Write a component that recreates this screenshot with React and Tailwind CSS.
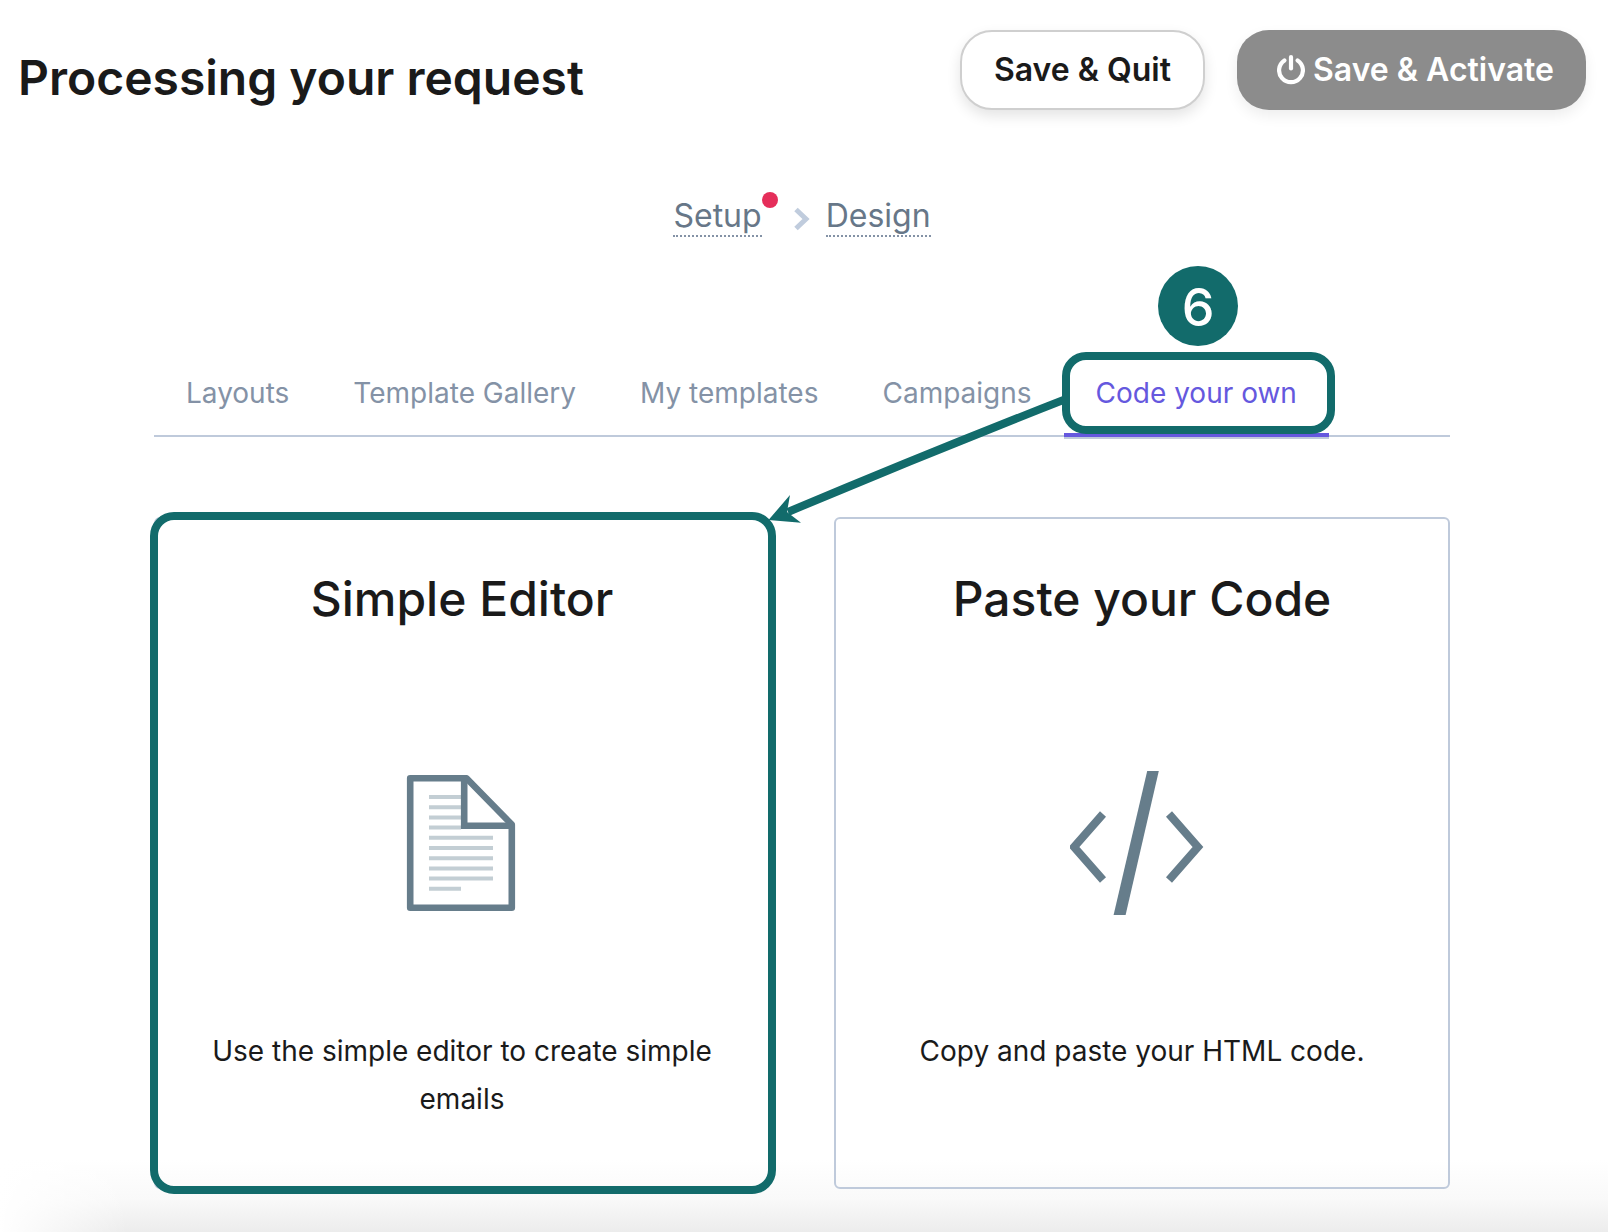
const tabs = ["Layouts", "Template Gallery", "My templates", "Campaigns"];

function PowerIcon() {
  return (
    <svg width="28" height="30" viewBox="0 0 28 30" fill="none" stroke="currentColor" strokeWidth="4.2" strokeLinecap="round" aria-hidden="true">
      <path d="M7.400 5.400A11.900 11.900 0 1 0 20.600 5.400" />
      <path d="M14 2.100V13.400" />
    </svg>
  );
}

function DocumentIcon() {
  return (
    <svg width="144" height="144" viewBox="0 0 144 144" fill="none" aria-hidden="true">
      <g stroke="#c3ced4" strokeWidth="4">
        <path d="M39 26H71M39 36.2H71M39 46.4H71M39 56.6H71" />
        <path d="M39 66.8H103M39 77H103M39 87.2H103M39 97.4H103M39 107.6H103M39 117.8H71" />
      </g>
      <path d="M20.2 7.2H76.5L121.8 53.5V136.8H20.2Z" stroke="#667d8b" strokeWidth="6.6" strokeLinejoin="round" />
      <path d="M74.2 7V54.8H121" stroke="#667d8b" strokeWidth="6.6" />
    </svg>
  );
}

function CodeIcon() {
  return (
    <svg width="144" height="144" viewBox="0 0 144 144" fill="none" aria-hidden="true">
      <path d="M77.200 0H88.800L55.600 144H43.600Z" fill="#667d8b" />
      <path d="M33 43L4 76L33 109" stroke="#667d8b" strokeWidth="8" />
      <path d="M99 43L128 76L99 109" stroke="#667d8b" strokeWidth="8" />
    </svg>
  );
}

function Card({ title, text, icon, highlighted }) {
  return (
    <a href="#" className="relative block rounded-md border-2 border-[#bfcadb] px-8 pt-12 pb-16 text-center">
      <h2 className="text-[48px] leading-16 font-medium">{title}</h2>
      <div className="mt-[140px] flex justify-center">{icon}</div>
      <p className="mt-28 min-h-24 text-[28px] leading-12">{text}</p>
      {highlighted && (
        <span className="pointer-events-none absolute -top-[7px] -right-2 -bottom-[7px] -left-1.5 rounded-3xl border-8 border-[#126b6b]" />
      )}
    </a>
  );
}

export default function App() {
  return (
    <div className="relative min-h-screen bg-white pr-1 pb-10 font-['Inter',sans-serif] text-[#1a1a1a]">
      <div className="pointer-events-none absolute inset-x-0 bottom-0 h-18 bg-[linear-gradient(to_right,white,transparent_128px),linear-gradient(to_top,#ececec,#f9f9f9_45%,white)]" />

      <header className="relative flex items-start justify-between px-[18px] pt-[30px]">
        <h1 className="mt-4 text-[48px] leading-16 font-semibold">Processing your request</h1>
        <div className="flex gap-8">
          <button type="button" className="h-20 rounded-[32px] border-2 border-[#cfcfcf] bg-white px-8 text-[32px] font-semibold shadow-[0_6px_14px_rgba(0,0,0,0.11)]">
            Save &amp; Quit
          </button>
          <button type="button" className="flex h-20 items-center gap-2 rounded-[32px] bg-[#8c8c8c] pr-8 pl-10 text-[32px] font-semibold text-white shadow-[0_6px_14px_rgba(0,0,0,0.07)]">
            <PowerIcon />
            Save &amp; Activate
          </button>
        </div>
      </header>

      <nav aria-label="Steps" className="relative mt-[87px] flex items-center justify-center text-[32px] leading-[38px] text-[#677788]">
        <a href="#" className="relative border-b-2 border-dotted border-[#8492a6]">
          Setup
          <span className="absolute -top-[5px] left-full size-4 rounded-full bg-[#e52e5a]" />
        </a>
        <svg className="mt-1 mr-4 ml-8" width="16" height="24" viewBox="0 0 16 24" fill="none" stroke="#c0ccdd" strokeWidth="5" aria-hidden="true">
          <path d="M2 2.500L12 12L2 21.500" />
        </svg>
        <a href="#" className="border-b-2 border-dotted border-[#8492a6]">Design</a>
      </nav>

      <main className="relative mx-auto mt-[116px] max-w-[1296px]">
        <nav aria-label="Templates" className="relative z-10 flex border-b-2 border-[#bfcadb] text-[28px] leading-10 text-[#8492a6]">
          {tabs.map((tab) => (
            <a key={tab} href="#" className="-mb-0.5 px-8 pt-5 pb-6 whitespace-nowrap">{tab}</a>
          ))}
          <div className="relative -mb-0.5">
            <a href="#" aria-current="page" className="block border-b-4 border-[#6558de] px-8 py-5 whitespace-nowrap text-[#6558de] shadow-[0_2px_0_#bfcadb]">
              Code your own
            </a>
            <span className="pointer-events-none absolute -top-px -right-1.5 bottom-[3px] -left-0.5 rounded-3xl border-8 border-[#126b6b]" />
            <span className="absolute bottom-full left-1/2 mb-[7px] ml-0.5 flex size-20 -translate-x-1/2 items-center justify-center rounded-full bg-[#126b6b] pt-1 text-[52px] leading-none font-medium text-white">
              6
            </span>
            <svg className="pointer-events-none absolute top-10 right-full" width="296" height="136" viewBox="0 0 296 136" aria-hidden="true">
              <path d="M298 6Q160 60 20 119" fill="none" stroke="#126b6b" strokeWidth="8" />
              <path d="M0.500 127L22 102L19 119L33 129.700Z" fill="#126b6b" />
            </svg>
          </div>
        </nav>

        <div className="mt-20 grid grid-cols-2 gap-16">
          <Card title="Simple Editor" text="Use the simple editor to create simple emails" icon={<DocumentIcon />} highlighted />
          <Card title="Paste your Code" text="Copy and paste your HTML code." icon={<CodeIcon />} />
        </div>
      </main>
    </div>
  );
}
